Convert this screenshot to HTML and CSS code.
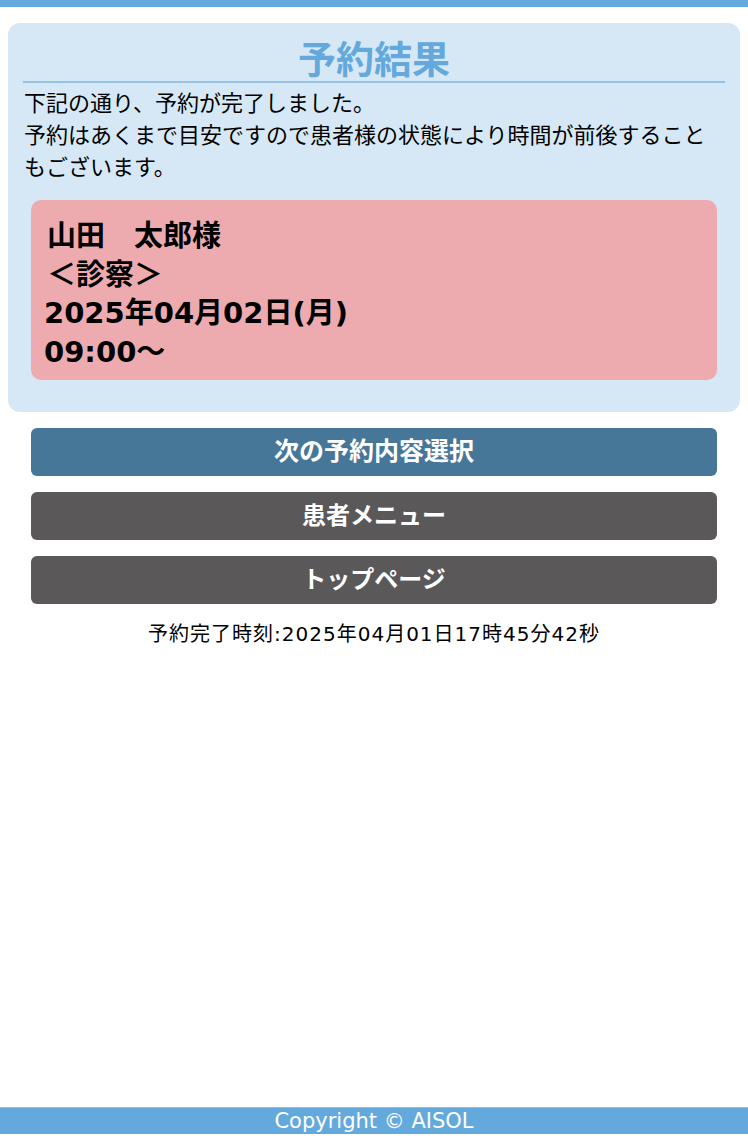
FILE: index.html
```html
<!DOCTYPE html>
<html lang="ja">
<head>
<meta charset="utf-8">
<title>予約結果</title>
<link rel="stylesheet" href="styles.css">
</head>
<body>
<div class="page">
  <div class="topbar"></div>
  <main class="main">
    <section class="panel">
      <h1 class="title">予約結果</h1>
      <p class="message">下記の通り、予約が完了しました。<br>予約はあくまで目安ですので患者様の状態により時間が前後することもございます。</p>
      <div class="ticket">
        <div class="ticket-line ticket-name">山田　太郎様</div>
        <div class="ticket-line ticket-kind">＜診察＞</div>
        <div class="ticket-line">2025年04月02日(月)</div>
        <div class="ticket-line">09:00～</div>
      </div>
    </section>
    <nav class="actions">
      <a class="btn btn-primary" href="#">次の予約内容選択</a>
      <a class="btn btn-dark" href="#">患者メニュー</a>
      <a class="btn btn-dark" href="#">トップページ</a>
    </nav>
    <p class="done-time">予約完了時刻:2025年04月01日17時45分42秒</p>
  </main>
  <footer class="footer">Copyright © AISOL</footer>
</div>
</body>
</html>
```

FILE: styles.css
```css
html, body {
  margin: 0;
  padding: 0;
  background: #ffffff;
}

body {
  font-family: "DejaVu Sans", "Noto Sans CJK JP", sans-serif;
  color: #000000;
}

.page {
  min-height: 1138px;
  display: flex;
  flex-direction: column;
}

.topbar {
  height: 7px;
  background: #64a9dc;
}

.main {
  display: flex;
  flex-direction: column;
}

.panel {
  margin: 16px 8px 0;
  padding: 14px 15px 32px;
  background: #d6e8f6;
  border-radius: 12px;
}

.title {
  margin: 0;
  padding-bottom: 4px;
  font-family: "Noto Sans CJK JP", sans-serif;
  font-size: 38px;
  line-height: 40px;
  font-weight: bold;
  color: #64a9dc;
  text-align: center;
  border-bottom: 2px solid #93c2e6;
}

.message {
  margin: 5px 0 0;
  padding-left: 1px;
  font-size: 22px;
  line-height: 32px;
}

.ticket {
  margin: 16px 8px 0;
  padding: 17px 13px 9px;
  background: #edabaf;
  border-radius: 10px;
}

.ticket-line {
  font-size: 29px;
  line-height: 38.5px;
  font-weight: bold;
}

.ticket-name,
.ticket-kind {
  padding-left: 3px;
}

.actions {
  margin: 16px 31px 0;
  display: flex;
  flex-direction: column;
  gap: 16px;
}

.btn {
  display: block;
  height: 48px;
  line-height: 48px;
  border-radius: 6px;
  text-align: center;
  color: #ffffff;
  font-size: 24px;
  font-weight: bold;
  text-decoration: none;
}

.btn-primary {
  background: #467799;
  font-size: 25px;
}

.btn-dark {
  background: #5a5858;
}

.done-time {
  margin: 15px 0 0;
  text-align: center;
  font-size: 20px;
  line-height: 30px;
  letter-spacing: 1px;
}

.footer {
  margin-top: auto;
  margin-bottom: 4px;
  height: 26px;
  line-height: 27px;
  background: #64a9dc;
  border-top: 1px solid #8ec0e6;
  color: #ffffff;
  text-align: center;
  font-size: 21px;
}
```
